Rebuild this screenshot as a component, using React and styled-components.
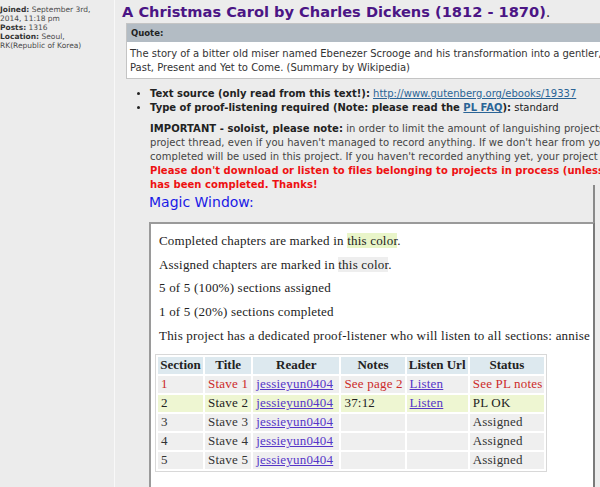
import React from "react";
import styled, { createGlobalStyle } from "styled-components";

const GlobalStyle = createGlobalStyle`
  html, body {
    margin: 0;
    padding: 0;
    background: #ececec;
    overflow: hidden;
  }
`;

const sections = [
  { n: 1, title: "Stave 1", reader: "jessieyun0404", notes: "See page 2", listen: true, status: "See PL notes", kind: "red" },
  { n: 2, title: "Stave 2", reader: "jessieyun0404", notes: "37:12", listen: true, status: "PL OK", kind: "done" },
  { n: 3, title: "Stave 3", reader: "jessieyun0404", notes: "", listen: false, status: "Assigned", kind: "assigned" },
  { n: 4, title: "Stave 4", reader: "jessieyun0404", notes: "", listen: false, status: "Assigned", kind: "assigned" },
  { n: 5, title: "Stave 5", reader: "jessieyun0404", notes: "", listen: false, status: "Assigned", kind: "assigned" },
];

const columns = [
  { label: "Section", width: 45 },
  { label: "Title", width: 46 },
  { label: "Reader", width: 86 },
  { label: "Notes", width: 63 },
  { label: "Listen Url", width: 61 },
  { label: "Status", width: 74 },
];

const App = () => {
  return (
    <>
      <GlobalStyle />
      <Page>
        <Sidebar>
          <Label>Joined:</Label> September 3rd,
          <br />
          2014, 11:18 pm
          <br />
          <Label>Posts:</Label> 1316
          <br />
          <Label>Location:</Label> Seoul,
          <br />
          RK(Republic of Korea)
        </Sidebar>

        <Main>
          <Title>
            A Christmas Carol by Charles Dickens (1812 - 1870)<Dot>.</Dot>
          </Title>

          <QuoteBox>
            <QuoteHead>Quote:</QuoteHead>
            <QuoteBody>
              The story of a bitter old miser named Ebenezer Scrooge and his transformation into a gentler, kindlier man after visitations by the ghost of his former business partner and the Ghosts of Christmas
              <br />
              Past, Present and Yet to Come. (Summary by Wikipedia)
            </QuoteBody>
          </QuoteBox>

          <Bullets>
            <li>
              <b>Text source (only read from this text!):</b>{" "}
              <PlainLink href="#">http://www.gutenberg.org/ebooks/19337</PlainLink>
            </li>
            <li>
              <b>
                Type of proof-listening required (Note: please read the{" "}
                <PlainLink href="#">PL FAQ</PlainLink>):
              </b>{" "}
              standard
            </li>
          </Bullets>

          <Notice>
            <b>IMPORTANT - soloist, please note:</b> in order to limit the amount of languishing projects, we ask that you post to the
            <br />
            project thread, even if you haven't managed to record anything. If we don't hear from you for some time, the sections
            <br />
            completed will be used in this project. If you haven't recorded anything yet, your project will be
            <br />
            <Warn>
              Please don't download or listen to files belonging to projects in process (unless you are the proof-listener) until the project
              <br />
              has been completed. Thanks!
            </Warn>
          </Notice>

          <MagicTitle>Magic Window:</MagicTitle>

          <MagicBox>
            <Line>
              Completed chapters are marked in <Swatch tone="done">this color</Swatch>.
            </Line>
            <Line>
              Assigned chapters are marked in <Swatch tone="assigned">this color</Swatch>.
            </Line>
            <Line>5 of 5 (100%) sections assigned</Line>
            <Line>1 of 5 (20%) sections completed</Line>
            <Line>This project has a dedicated proof-listener who will listen to all sections: annise</Line>

            <Table>
              <colgroup>
                {columns.map((c) => (
                  <col key={c.label} style={{ width: c.width }} />
                ))}
              </colgroup>
              <thead>
                <tr>
                  {columns.map((c) => (
                    <Th key={c.label}>{c.label}</Th>
                  ))}
                </tr>
              </thead>
              <tbody>
                {sections.map((s) => (
                  <Row key={s.n} kind={s.kind}>
                    <Td>{s.n}</Td>
                    <Td>{s.title}</Td>
                    <Td>
                      <CellLink href="#">{s.reader}</CellLink>
                    </Td>
                    <Td>{s.notes}</Td>
                    <Td>{s.listen && <CellLink href="#">Listen</CellLink>}</Td>
                    <Td>{s.status}</Td>
                  </Row>
                ))}
              </tbody>
            </Table>
          </MagicBox>
        </Main>
      </Page>
    </>
  );
};

export default App;

const Page = styled.div`
  display: flex;
  width: 600px;
  height: 487px;
  overflow: hidden;
  background: #ececec;
`;

const Sidebar = styled.div`
  flex: 0 0 115px;
  box-sizing: border-box;
  padding: 5px 0 0 0;
  border-right: 1px solid #f8f8f8;
  font-family: "DejaVu Sans", Verdana, sans-serif;
  font-size: 7.5px;
  line-height: 9px;
  color: #4a4a4a;
  white-space: nowrap;
`;

const Label = styled.b`
  color: #333;
`;

const Main = styled.div`
  flex: 1;
  min-width: 0;
  padding-left: 7px;
  overflow: hidden;
  font-family: "DejaVu Sans", Verdana, sans-serif;
  font-size: 10px;
  color: #333;
`;

const Title = styled.h1`
  margin: 1px 0 0 0;
  font-family: "DejaVu Sans", Verdana, sans-serif;
  font-size: 14.6px;
  line-height: 22px;
  font-weight: bold;
  color: #4b1585;
  white-space: nowrap;
`;

const Dot = styled.span`
  font-weight: normal;
  color: #333;
`;

const QuoteBox = styled.div`
  margin: 0 0 0 4px;
  width: 700px;
  border: 1px solid #c4c4c4;
  background: #fff;
`;

const QuoteHead = styled.div`
  background: #b3bcc4;
  padding: 0 4px;
  height: 18px;
  line-height: 18px;
  font-size: 8.5px;
  font-weight: bold;
  color: #222;
`;

const QuoteBody = styled.div`
  padding: 5px 3px 3px;
  line-height: 14px;
  white-space: nowrap;
  color: #333;
`;

const Bullets = styled.ul`
  margin: 8px 0 0 0;
  padding-left: 28px;
  line-height: 14px;
  white-space: nowrap;
  color: #222;

  li {
    list-style: disc;
  }
`;

const PlainLink = styled.a`
  color: #2a6496;
  text-decoration: underline;
  font-weight: normal;

  b & {
    font-weight: bold;
  }
`;

const Notice = styled.div`
  margin: 7px 0 0 28px;
  line-height: 14px;
  white-space: nowrap;
  color: #444;
  letter-spacing: 0.05px;

  b {
    color: #222;
  }
`;

const Warn = styled.b`
  && {
    color: #ee1111;
  }
`;

const MagicTitle = styled.div`
  margin: -1px 0 0 27px;
  font-family: "DejaVu Sans", sans-serif;
  font-size: 14px;
  line-height: 22px;
  color: #1a1ae6;
`;

const MagicBox = styled.div`
  position: relative;
  margin: 9px 0 0 27px;
  width: 446px;
  height: 300px;
  box-sizing: border-box;
  padding: 9px 0 0 5px;
  background: #fff;
  border-top: 2px solid #9a9a9a;
  border-left: 2px solid #9a9a9a;
  border-right: 2px solid #7a7a7a;
  font-family: "Liberation Serif", "DejaVu Serif", serif;
  font-size: 13px;
  letter-spacing: 0.2px;
  color: #222;

  &::before {
    content: "";
    position: absolute;
    right: -2px;
    top: -39px;
    width: 2px;
    height: 37px;
    background: #8a8a8a;
  }
`;

const Line = styled.p`
  margin: 0 0 7.7px 3px;
  line-height: 16px;
  white-space: nowrap;
`;

const Swatch = styled.span`
  background: ${({ tone }) => (tone === "done" ? "#e9f5c9" : "#eeeeee")};
`;

const Table = styled.table`
  width: 392px;
  margin: 10px 0 0 -1px;
  table-layout: fixed;
  border: 1px solid #d8d8d8;
  border-collapse: separate;
  border-spacing: 2px;
  font-family: "Liberation Serif", "DejaVu Serif", serif;
  font-size: 13px;
`;

const Th = styled.th`
  background: #dde9ef;
  padding: 0 1px;
  height: 17px;
  font-weight: bold;
  color: #222;
  white-space: nowrap;
  overflow: hidden;
  letter-spacing: 0;
`;

const rowColors = {
  red: { bg: "#efefef", fg: "#cc2a2a" },
  done: { bg: "#eef6d2", fg: "#222" },
  assigned: { bg: "#efefef", fg: "#333" },
};

const Row = styled.tr`
  background: ${({ kind }) => rowColors[kind].bg};
  color: ${({ kind }) => rowColors[kind].fg};
`;

const Td = styled.td`
  padding: 0 3px;
  height: 17px;
  white-space: nowrap;
  overflow: hidden;
  text-align: left;
`;

const CellLink = styled.a`
  color: #5535c8;
  text-decoration: underline;
`;
